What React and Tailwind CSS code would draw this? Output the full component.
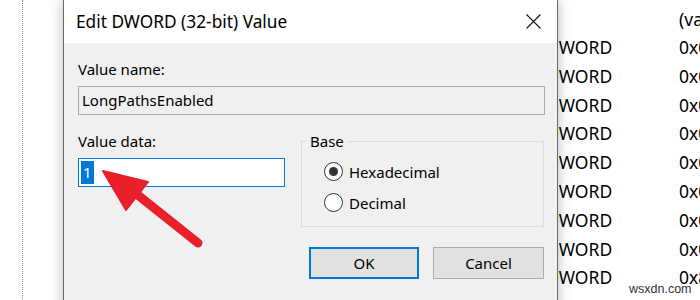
import React from 'react';

const ROWS = [
  { type: '', value: '(value not set)' },
  { type: 'REG_DWORD', value: '0x00000000' },
  { type: 'REG_DWORD', value: '0x00000000' },
  { type: 'REG_DWORD', value: '0x00000000' },
  { type: 'REG_DWORD', value: '0x00000001' },
  { type: 'REG_DWORD', value: '0x00000000' },
  { type: 'REG_DWORD', value: '0x00000001' },
  { type: 'REG_DWORD', value: '0x00000000' },
  { type: 'REG_DWORD', value: '0x00000001' },
  { type: 'REG_DWORD', value: '0x80000000' },
];

function Radio({ checked, label }) {
  return (
    <div className="flex items-center h-[19px]">
      <span className="flex items-center justify-center w-[19px] h-[19px] rounded-full border border-[#333] bg-white">
        {checked && <span className="w-[9px] h-[9px] rounded-full bg-[#333]" />}
      </span>
      <span className="ml-[6px] text-[15px] leading-[20px]">{label}</span>
    </div>
  );
}

function EditDwordDialog() {
  return (
    <div className="absolute left-[63px] top-0 w-[495px] h-[330px] border-x border-x-[#6b6b6b] bg-[#f0f0f0] shadow-[0_0_12px_rgba(0,0,0,0.28)] text-black">
      {/* title bar */}
      <div className="flex h-[43px] items-center justify-between bg-white pl-[12px] pr-[16px]">
        <span className="text-[17.3px] leading-[24px]">Edit DWORD (32-bit) Value</span>
        <svg width="15" height="15" viewBox="0 0 15 15" className="mb-[1px]">
          <path d="M0.5 0.5 L14.5 14.5 M14.5 0.5 L0.5 14.5" stroke="#111" strokeWidth="1.1" fill="none" />
        </svg>
      </div>

      <div className="pl-[14px] pr-[12px] pt-[16px]">
        <div className="text-[15px] leading-[20px]">Value name:</div>
        <div className="mt-[7px] flex h-[29px] items-center border border-[#a8a8a8] bg-[#f0f0f0] pl-[3px] text-[15px]">
          LongPathsEnabled
        </div>

        <div className="mt-[16px] grid grid-cols-[207px_243px] gap-x-[16px]">
          <div>
            <div className="text-[15px] leading-[20px]">Value data:</div>
            <div className="mt-[7px] flex h-[29px] items-center border border-[#0078d7] bg-white pl-[2px]">
              <span className="bg-[#0078d7] px-[2px] text-[15px] leading-[23px] text-white">1</span>
            </div>
          </div>

          <div className="pt-[10px]">
            <div className="relative h-[86px] border border-[#dcdcdc] pl-[22px] pt-[20px]">
              <span className="absolute -top-[11px] left-[4px] bg-[#f0f0f0] px-[4px] text-[15px] leading-[20px]">
                Base
              </span>
              <Radio checked label="Hexadecimal" />
              <div className="mt-[12px]">
                <Radio label="Decimal" />
              </div>
            </div>
            <div className="mt-[20px] flex justify-end gap-[14px]">
              <button className="h-[32px] w-[110px] border-2 border-[#0078d7] bg-[#e1e1e1] text-[15px]">OK</button>
              <button className="h-[32px] w-[111px] border border-[#adadad] bg-[#e1e1e1] text-[15px]">Cancel</button>
            </div>
          </div>
        </div>
      </div>
    </div>
  );
}

function Arrow() {
  return (
    <svg className="absolute left-0 top-0 pointer-events-none" width="700" height="300">
      <line x1="134" y1="192" x2="198" y2="243" stroke="#e8202a" strokeWidth="9" strokeLinecap="round" />
      <polygon points="103,171 148,182 126,210" fill="#e8202a" stroke="#e8202a" strokeWidth="2" strokeLinejoin="round" />
    </svg>
  );
}

export default function App() {
  return (
    <div
      className="relative w-[700px] h-[300px] overflow-hidden bg-white text-black"
      style={{ fontFamily: '"Noto Sans", "Open Sans", sans-serif' }}
    >
      {/* registry list behind the dialog */}
      <div className="flex h-full">
        <div className="w-[22px] shrink-0" />
        <div className="h-full shrink-0 border-l border-dotted border-l-[#8a8a8a]" />
        <div className="w-[482px] shrink-0" />
        <div className="pt-[6px] flex shrink-0 flex-col w-[100px] text-right text-[17.5px] whitespace-nowrap">
          {ROWS.map((r, i) => (
            <div key={i} className={i === 0 ? 'h-[27px] leading-[27px]' : 'h-[28.8px] leading-[28.8px]'}>
              {r.type}
            </div>
          ))}
        </div>
        <div className="ml-[74px] pt-[6px] flex shrink-0 flex-col text-[17.5px] whitespace-nowrap">
          {ROWS.map((r, i) => (
            <div key={i} className={i === 0 ? 'h-[27px] leading-[27px]' : 'h-[28.8px] leading-[28.8px]'}>
              {r.value}
            </div>
          ))}
        </div>
      </div>

      <EditDwordDialog />
      <Arrow />

      <div
        className="absolute left-[629px] top-[281px] text-[12.5px] leading-[16px] text-[#333]"
        style={{ fontFamily: '"Liberation Sans", Arial, sans-serif' }}
      >
        wsxdn.com
      </div>
    </div>
  );
}
